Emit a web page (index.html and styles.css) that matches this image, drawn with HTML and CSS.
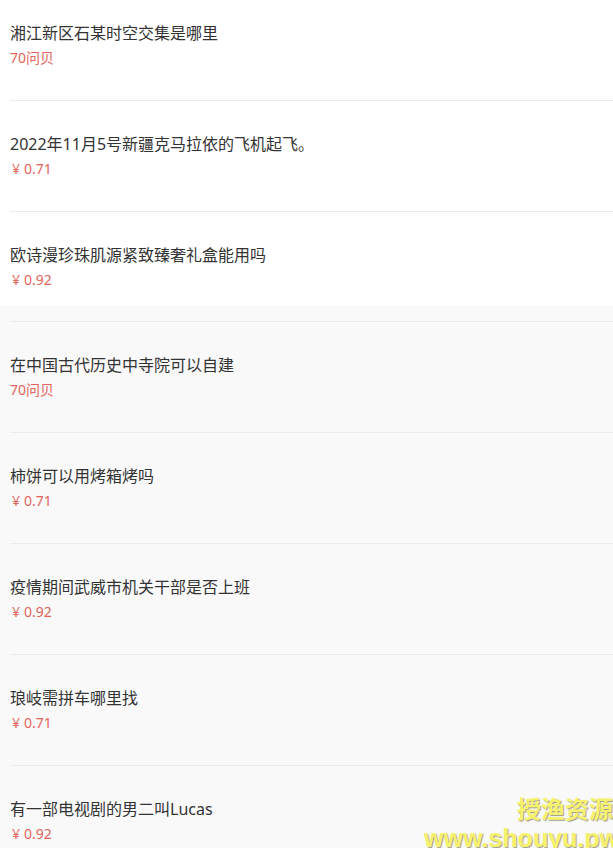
FILE: index.html
```html
<!DOCTYPE html>
<html lang="zh-CN">
<head>
    <meta charset="UTF-8">
    <meta name="viewport" content="width=device-width, initial-scale=1.0">
    <title>问答列表</title>
    <link rel="stylesheet" href="styles.css">
</head>
<body>

    <div class="list list-top">
        <div class="item first">
            <div class="title">湘江新区石某时空交集是哪里</div>
            <div class="price">70问贝</div>
        </div>
        <div class="item">
            <div class="title">2022年11月5号新疆克马拉依的飞机起飞。</div>
            <div class="price"><span class="yen">¥</span>0.71</div>
        </div>
        <div class="item">
            <div class="title">欧诗漫珍珠肌源紧致臻奢礼盒能用吗</div>
            <div class="price"><span class="yen">¥</span>0.92</div>
        </div>
    </div>

    <div class="list list-more">
        <div class="list-head"></div>
        <div class="item">
            <div class="title">在中国古代历史中寺院可以自建</div>
            <div class="price">70问贝</div>
        </div>
        <div class="item">
            <div class="title">柿饼可以用烤箱烤吗</div>
            <div class="price"><span class="yen">¥</span>0.71</div>
        </div>
        <div class="item">
            <div class="title">疫情期间武威市机关干部是否上班</div>
            <div class="price"><span class="yen">¥</span>0.92</div>
        </div>
        <div class="item">
            <div class="title">琅岐需拼车哪里找</div>
            <div class="price"><span class="yen">¥</span>0.71</div>
        </div>
        <div class="item">
            <div class="title">有一部电视剧的男二叫Lucas</div>
            <div class="price"><span class="yen">¥</span>0.92</div>
        </div>
    </div>

    <div class="watermark">
        <div class="wm-cn">授渔资源</div>
        <div class="wm-url">www.shouyu.pw</div>
    </div>

</body>
</html>
```

FILE: styles.css
```css
body {
    font-family: "Noto Sans", "Noto Sans CJK SC", sans-serif;
    background-color: #f9f9f9;
    margin: 0;
    padding: 0;
    height: 848px;
    overflow: hidden;
    position: relative;
}
.list-top {
    background-color: #fff;
    height: 306px;
    overflow: hidden;
}
.list-head {
    height: 15px;
    margin-left: 10px;
    border-bottom: 1px solid #ebebeb;
}
.item {
    margin-left: 10px;
    padding: 31px 0 30px;
    border-bottom: 1px solid #ebebeb;
}
.item.first {
    padding-top: 21px;
}
.title {
    font-size: 16px;
    line-height: 24px;
    color: #333;
    white-space: nowrap;
}
.price {
    margin-top: 1px;
    font-size: 14px;
    line-height: 24px;
    color: #e2645a;
}
.yen {
    display: inline-block;
    margin-left: 2px;
    margin-right: 4px;
}
.watermark {
    position: absolute;
    right: -6px;
    bottom: -5px;
    text-align: right;
    font-family: "Liberation Sans", sans-serif;
    font-weight: bold;
    color: #f6f26c;
    text-shadow: 1px 1px 1px #9a9a8a;
}
.wm-cn {
    font-family: "Noto Sans CJK SC", sans-serif;
    font-size: 24px;
    line-height: 30px;
    padding-right: 6px;
}
.wm-url {
    font-size: 25px;
    line-height: 30px;
}
```
